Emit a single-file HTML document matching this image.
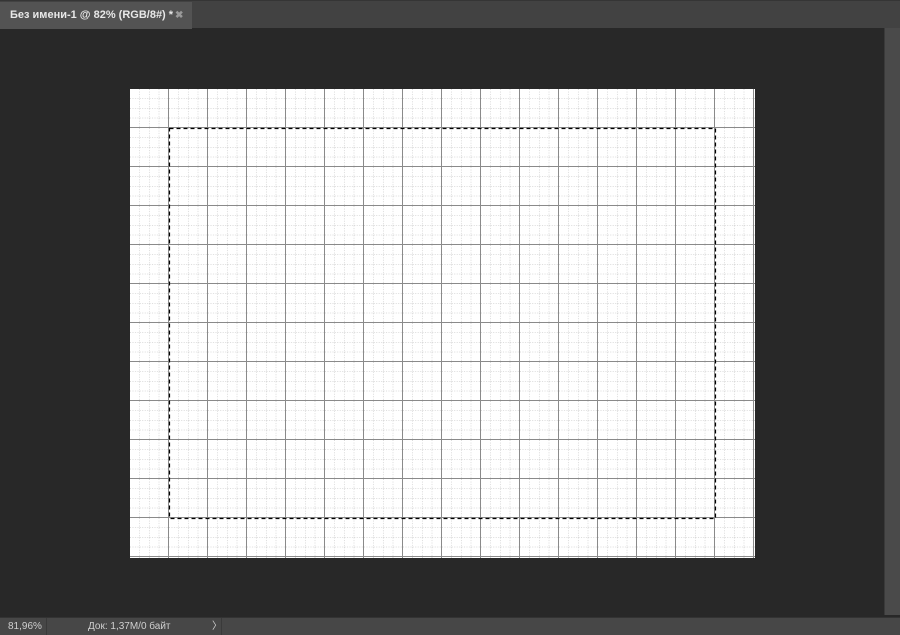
<!DOCTYPE html>
<html><head><meta charset="utf-8"><style>
html,body{margin:0;padding:0;width:900px;height:635px;overflow:hidden;background:#282828;font-family:"Liberation Sans",sans-serif;}
.top{position:absolute;left:0;top:0;width:900px;height:28px;background:#424242;border-top:1px solid #353535;box-sizing:border-box;}
.tab{position:absolute;left:0;top:1px;width:192px;height:27px;background:#535353;color:#e8e8e8;font-size:11px;font-weight:bold;line-height:27px;padding-left:10px;box-sizing:border-box;white-space:nowrap;}
.tab .x{position:absolute;left:175px;top:0;color:#9a9a9a;font-size:10px;}
.sb{position:absolute;left:884px;top:28px;width:16px;height:587px;background:#4a4a4a;border-left:1px solid #3a3a3a;box-sizing:border-box;}
.status{position:absolute;left:0;top:617px;width:900px;height:18px;background:#474747;border-top:1px solid #333;box-sizing:border-box;font-size:10px;color:#d0d0d0;line-height:17px;}
.status .z{position:absolute;left:8px;}
.status .sep{position:absolute;left:46px;top:0;width:1px;height:17px;background:#3a3a3a;}
.status .d{position:absolute;left:88px;}
.status .a{position:absolute;left:212px;}
.status .sep2{position:absolute;left:221px;top:0;width:1px;height:17px;background:#3a3a3a;}
svg{position:absolute;left:130px;top:89px;}
</style></head><body>
<div class="top"><div class="tab">Без имени-1 @ 82% (RGB/8#) *<span class="x">✖</span></div></div>
<svg width="625" height="469" viewBox="0 0 625 469">
<defs>
<pattern id="minor" width="9.75" height="9.75" patternUnits="userSpaceOnUse">
<path d="M9.75 0V9.75M0 9.75H9.75" stroke="#b4b4b4" stroke-width="1" stroke-dasharray="1 1.5" fill="none"/>
</pattern>
<pattern id="major" width="39" height="39" patternUnits="userSpaceOnUse">
<path d="M38.5 0V39M0 38.5H39" stroke="#8a8a8a" stroke-width="1" fill="none"/>
</pattern>
</defs>
<rect width="625" height="469" fill="#fff"/>
<rect width="625" height="469" fill="url(#minor)"/>
<rect width="625" height="469" fill="url(#major)"/>
<rect x="39.5" y="39.5" width="546" height="390" fill="none" stroke="#000" stroke-width="1.2" stroke-dasharray="4 3"/>
</svg>
<div class="sb"></div>
<div class="status"><span class="z">81,96%</span><div class="sep"></div><span class="d">Док: 1,37M/0 байт</span><span class="a">〉</span><div class="sep2"></div></div>
</body></html>
